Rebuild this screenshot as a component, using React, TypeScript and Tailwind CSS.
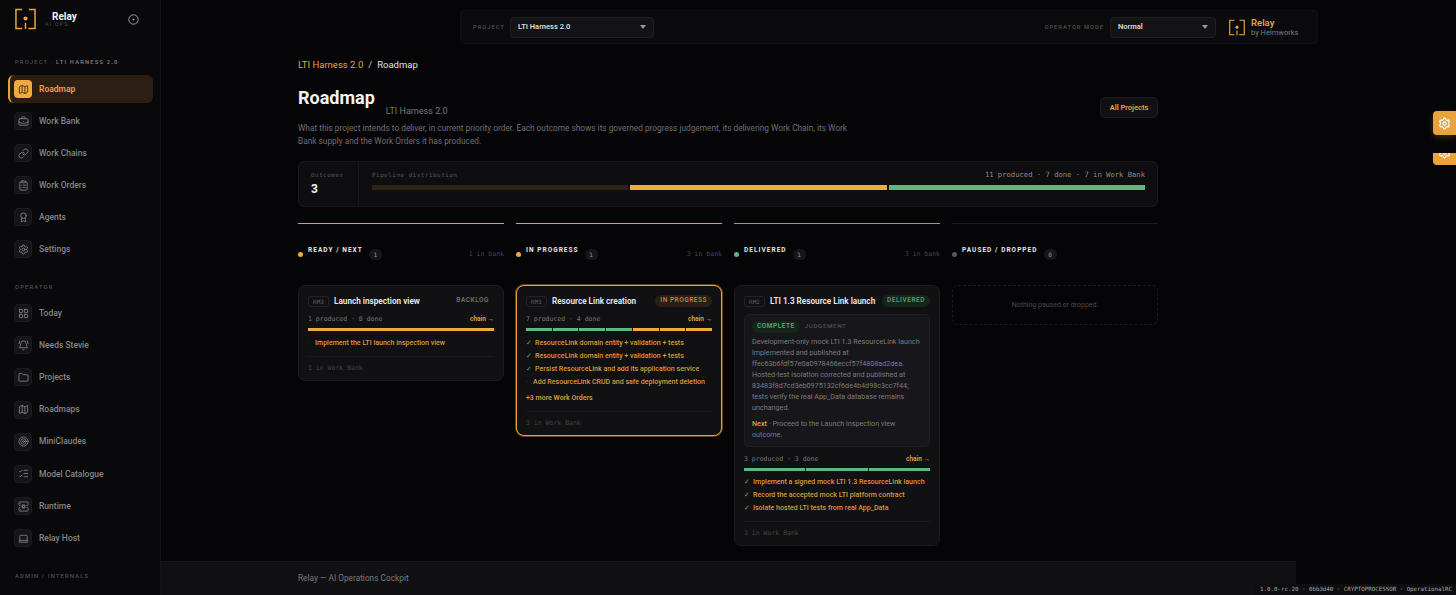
import React from "react";
import { Map as MapIcon, BriefcaseBusiness, Link as LinkIcon, ClipboardList, Award, Settings, LayoutGrid, BellRing, Folder, Target, ListChecks, ServerCog, Laptop } from "lucide-react";

const mono = "font-['DejaVu_Sans_Mono',monospace]";

function Logo({ className }: { className: string }) {
  return (
    <svg viewBox="0 0 22 22" fill="none" className={className} stroke="#e8a33d" strokeWidth="1.6">
      <path d="M7.5 1H1v20h6.5M14.5 1H21v20h-7" />
      <circle cx="11" cy="10.5" r="2.1" fill="#e8a33d" stroke="none" />
      <path d="M11 15v6.5" />
    </svg>
  );
}

function NavItem({ icon: Icon, label, active }: { icon: any; label: string; active?: boolean }) {
  if (active) {
    return (
      <div className="flex items-center gap-[7px] h-[28px] ml-[8px] mr-[7px] pl-[4px] rounded-[6px] bg-[#2a1f12] border-l-2 border-[#e8a33d]">
        <div className="w-[18px] h-[18px] rounded-[4px] bg-[#f0aa42] flex items-center justify-center">
          <Icon size={11} className="text-[#4a3010]" strokeWidth={2} />
        </div>
        <span className="text-[8.5px] font-semibold text-[#e8a33d]">{label}</span>
      </div>
    );
  }
  return (
    <div className="flex items-center gap-[7px] h-[28px] ml-[8px] mr-[7px] pl-[6px]">
      <div className="w-[18px] h-[18px] rounded-[4px] bg-[#151517] border border-[#1c1c1f] flex items-center justify-center">
        <Icon size={11} className="text-[#8e8e90]" strokeWidth={1.7} />
      </div>
      <span className="text-[8.5px] font-medium text-[#858587]">{label}</span>
    </div>
  );
}

function Select({ value, w }: { value: string; w: string }) {
  return (
    <div className={`${w} h-[21px] rounded-[4px] bg-[#131315] border border-[#1f1f22] flex items-center justify-between pl-[7px] pr-[7px]`}>
      <span className="text-[7.5px] font-semibold text-[#dcdcdc]">{value}</span>
      <svg width="6" height="4" viewBox="0 0 6 4"><path d="M0 0h6L3 4z" fill="#9a9a9a" /></svg>
    </div>
  );
}

function Tag({ children, cls }: { children: React.ReactNode; cls: string }) {
  return <span className={`text-[6.5px] font-semibold tracking-[0.08em] rounded-full px-[5px] h-[12px] flex items-center whitespace-nowrap ${cls}`}>{children}</span>;
}

function ColHead({ dot, line, title, count, bank }: { dot: string; line: string; title: string; count: number; bank?: string }) {
  return (
    <div className="flex flex-col">
      <div className={`h-px ${line}`} />
      <div className="flex items-center mt-[24px] h-[12px]">
        <span className={`w-[5px] h-[5px] rounded-full ${dot}`} />
        <span className="ml-[5px] mb-[7px] text-[6.5px] font-bold tracking-[0.16em] text-[#e6e6e6] whitespace-nowrap">{title}</span>
        <span className={`ml-[6px] w-[13px] h-[11px] rounded-full bg-[#17171a] text-[6px] text-[#9a9a9a] flex items-center justify-center ${mono}`}>{count}</span>
        {bank && <span className={`ml-auto mt-[2px] text-[6.5px] text-[#454547] ${mono}`}>{bank}</span>}
      </div>
    </div>
  );
}

function Head({ rm, title, tag }: { rm: string; title: string; tag: React.ReactNode }) {
  return (
    <div className="flex items-center h-[12px]">
      <span className={`h-[11px] w-[21px] shrink-0 rounded-[3px] border border-[#232326] flex items-center justify-center text-[6px] text-[#5e5e60] ${mono}`}>{rm}</span>
      <span className="ml-[5px] text-[8.2px] font-semibold text-[#ececec] whitespace-nowrap">{title}</span>
      <span className="ml-auto">{tag}</span>
    </div>
  );
}

function Progress({ text, bars }: { text: string; bars: string[] }) {
  return (
    <>
      <div className="flex items-center justify-between h-[10px]">
        <span className={`text-[6.5px] text-[#77777a] ${mono}`}>{text}</span>
        <span className="text-[6.5px] font-semibold text-[#e8a33d]">chain →</span>
      </div>
      <div className="flex gap-[1px] mt-[3px] h-[3px]">
        {bars.map((c, i) => (
          <div key={i} className={`flex-1 ${c}`} />
        ))}
      </div>
    </>
  );
}

function WO({ text, done }: { text: string; done?: boolean }) {
  return (
    <div className="flex items-center h-[13px]">
      <span className={`shrink-0 text-[7px] ${done ? "w-[9px] text-[#56a878]" : "w-[7px] text-[#444]"}`}>{done ? "✓" : "·"}</span>
      <span className="text-[7.05px] font-medium text-[#d9983a] whitespace-nowrap">{text}</span>
    </div>
  );
}

function CardFoot({ text }: { text: string }) {
  return (
    <div className="border-t border-[#1b1b1e] mt-[6px] pt-[7px] h-[16px]">
      <div className={`text-[6.5px] leading-[8px] text-[#434345] ${mono}`}>{text}</div>
    </div>
  );
}

const G = "bg-[#5bb880]";
const O = "bg-[#f0aa42]";
const sideLabel = "ml-[15px] text-[5.8px] leading-[8px] tracking-[0.2em] text-[#4f4f51] font-medium whitespace-nowrap";

export default function App() {
  return (
    <div className="relative flex h-[595px] w-[1456px] overflow-hidden bg-[#050507] font-['Roboto',sans-serif]">
      <aside className="w-[161px] shrink-0 bg-[#09090b] border-r border-[#141416] flex flex-col">
        <div className="flex items-center pt-[8px] pl-[15px] pr-[21px] h-[30px]">
          <Logo className="w-[21px] h-[22px] shrink-0" />
          <div className="ml-[9px] flex flex-col">
            <span className="ml-[7px] text-[10px] font-bold leading-[12px] text-[#f2f2f2]">Relay</span>
            <span className="-mt-[2px] text-[5.5px] tracking-[0.2em] leading-[7px] text-[#4a4a4c]">AI OPS</span>
          </div>
          <svg className="ml-auto" width="11" height="11" viewBox="0 0 11 11" fill="none">
            <circle cx="5.5" cy="5.5" r="4.7" stroke="#9c9c9c" />
            <circle cx="5.5" cy="5.5" r="1" fill="#9c9c9c" />
          </svg>
        </div>
        <div className={`mt-[28px] ${sideLabel}`}>
          PROJECT · <span className="text-[#79797b] font-semibold">LTI HARNESS 2.0</span>
        </div>
        <div className="mt-[9px] flex flex-col gap-[4px]">
          <NavItem icon={MapIcon} label="Roadmap" active />
          <NavItem icon={BriefcaseBusiness} label="Work Bank" />
          <NavItem icon={LinkIcon} label="Work Chains" />
          <NavItem icon={ClipboardList} label="Work Orders" />
          <NavItem icon={Award} label="Agents" />
          <NavItem icon={Settings} label="Settings" />
        </div>
        <div className={`mt-[20px] ${sideLabel}`}>OPERATOR</div>
        <div className="mt-[8px] flex flex-col gap-[4.2px]">
          <NavItem icon={LayoutGrid} label="Today" />
          <NavItem icon={BellRing} label="Needs Stevie" />
          <NavItem icon={Folder} label="Projects" />
          <NavItem icon={MapIcon} label="Roadmaps" />
          <NavItem icon={Target} label="MiniClaudes" />
          <NavItem icon={ListChecks} label="Model Catalogue" />
          <NavItem icon={ServerCog} label="Runtime" />
          <NavItem icon={Laptop} label="Relay Host" />
        </div>
        <div className={`mt-[20px] ${sideLabel}`}>ADMIN / INTERNALS</div>
      </aside>

      <div className="w-[1135px] shrink-0 flex flex-col h-full">
        <header className="mt-[10px] ml-[299px] w-[858px] shrink-0 h-[34px] rounded-[4px] bg-[#0b0b0d] border border-[#101012] flex items-center pl-[12px] pr-[19px]">
          <span className="w-[31px] text-[5.8px] tracking-[0.17em] text-[#4f4f51] font-medium">PROJECT</span>
          <div className="ml-[6px]"><Select value="LTI Harness 2.0" w="w-[144px]" /></div>
          <span className="ml-auto text-[5.8px] tracking-[0.17em] text-[#4f4f51] font-medium whitespace-nowrap">OPERATOR MODE</span>
          <div className="ml-[6px]"><Select value="Normal" w="w-[106px]" /></div>
          <Logo className="ml-[13px] w-[16px] h-[17px]" />
          <div className="ml-[6px] w-[47px] flex flex-col">
            <span className="text-[9.5px] font-semibold leading-[11px] text-[#e8a33d]">Relay</span>
            <span className="text-[7.5px] leading-[9px] text-[#78787a] whitespace-nowrap">by Helmworks</span>
          </div>
        </header>

        <main className="flex-1 min-h-0 pl-[137px] pr-[138px] flex flex-col">
          <div className="mt-[15px] flex items-center text-[9.5px] leading-[12px] whitespace-nowrap">
            <span className="text-[#e8a33d]">LTI Harness 2.0</span>
            <span className="mx-[5px] text-[#d0d0d0]">/</span>
            <span className="text-[#e0e0e0]">Roadmap</span>
          </div>

          <div className="mt-[15px] flex items-start">
            <h1 className="text-[18px] leading-[24px] font-bold text-[#f2f2f2]">Roadmap</h1>
            <span className="ml-[11px] mt-[19px] text-[9px] leading-[12px] text-[#77777a]">LTI Harness 2.0</span>
            <button className="ml-auto mt-[11px] w-[58px] h-[21px] rounded-[5px] bg-[#111113] border border-[#1f1f22] text-[7.5px] font-semibold text-[#e8a33d]">All Projects</button>
          </div>
          <p className="mt-[4px] w-[550px] text-[8.3px] leading-[13px] text-[#6f6f72]">
            What this project intends to deliver, in current priority order. Each outcome shows its governed progress judgement, its delivering Work Chain, its Work Bank supply and the Work Orders it has produced.
          </p>

          <div className="mt-[13px] h-[46px] shrink-0 rounded-[6px] bg-[#0e0e10] border border-[#1b1b1e] flex">
            <div className="w-[60px] shrink-0 border-r border-[#18181b] pl-[12px] pt-[10px]">
              <div className={`text-[5.8px] leading-[7px] tracking-[0.1em] text-[#5a5a5c] ${mono}`}>Outcomes</div>
              <div className="mt-[3px] text-[12px] leading-[15px] font-bold text-[#efefef]">3</div>
            </div>
            <div className="flex-1 pl-[13px] pr-[12px] pt-[8px]">
              <div className="flex items-center justify-between h-[10px]">
                <span className={`text-[5.8px] tracking-[0.1em] text-[#5a5a5c] ${mono}`}>Pipeline distribution</span>
                <span className={`text-[7.2px] text-[#8a8a8c] ${mono}`}>11 produced · 7 done · 7 in Work Bank</span>
              </div>
              <div className="mt-[5px] flex gap-[2px] h-[5px]">
                <div className="flex-1 bg-[#2c2316]" />
                <div className="flex-1 bg-[#f0aa42]" />
                <div className="flex-1 bg-[#5bb880]" />
              </div>
            </div>
          </div>

          <div className="mt-[16px] grid grid-cols-4 gap-x-[12px] items-start">
            <ColHead dot="bg-[#f0aa42]" line="bg-[#e8a33d]" title="READY / NEXT" count={1} bank="1 in bank" />
            <ColHead dot="bg-[#f0aa42]" line="bg-[#e8a33d]" title="IN PROGRESS" count={1} bank="3 in bank" />
            <ColHead dot="bg-[#5bb880]" line="bg-[#5bb880]" title="DELIVERED" count={1} bank="3 in bank" />
            <ColHead dot="bg-[#5a5a5c]" line="bg-[#1d1d20]" title="PAUSED / DROPPED" count={0} />
          </div>

          <div className="mt-[25px] grid grid-cols-4 gap-x-[12px] items-start">
            <div className="rounded-[7px] bg-[#111113] border border-[#1b1b1e] px-[9px] pt-[9px] pb-[8px]">
              <Head rm="RM3" title="Launch inspection view" tag={<Tag cls="text-[#6e6e70]">BACKLOG</Tag>} />
              <div className="mt-[8px]" />
              <Progress text="1 produced · 0 done" bars={[O]} />
              <div className="mt-[6px]"><WO text="Implement the LTI launch inspection view" /></div>
              <CardFoot text="1 in Work Bank" />
            </div>

            <div className="rounded-[8px] bg-[#111113] border border-[#e8a33d] shadow-[0_0_0_1px_rgba(232,163,61,0.4)] px-[9px] pt-[9px] pb-[8px]">
              <Head rm="RM1" title="Resource Link creation" tag={<Tag cls="bg-[#2a1f12] text-[#b98434]">IN PROGRESS</Tag>} />
              <div className="mt-[8px]" />
              <Progress text="7 produced · 4 done" bars={[G, G, G, G, O, O, O]} />
              <div className="mt-[6px]">
                <WO done text="ResourceLink domain entity + validation + tests" />
                <WO done text="ResourceLink domain entity + validation + tests" />
                <WO done text="Persist ResourceLink and add its application service" />
                <WO text="Add ResourceLink CRUD and safe deployment deletion" />
              </div>
              <div className="mt-[3px] text-[7px] leading-[13px] font-semibold text-[#d9983a]">+3 more Work Orders</div>
              <CardFoot text="3 in Work Bank" />
            </div>

            <div className="rounded-[7px] bg-[#111113] border border-[#1b1b1e] px-[9px] pt-[9px] pb-[8px]">
              <Head rm="RM2" title="LTI 1.3 Resource Link launch" tag={<Tag cls="bg-[#14261c] text-[#4f9c70]">DELIVERED</Tag>} />
              <div className="mt-[7px] rounded-[5px] bg-[#17171b] border border-[#202024] px-[7px] pt-[6px] pb-[6px]">
                <div className="flex items-center">
                  <Tag cls="bg-[#14261c] text-[#56a878]">COMPLETE</Tag>
                  <span className="ml-[5px] text-[6.2px] font-medium tracking-[0.1em] text-[#4f4f51]">JUDGEMENT</span>
                </div>
                <p className="mt-[3px] text-[7.2px] leading-[11px] text-[#7a7a7e] whitespace-nowrap">
                  Development-only mock LTI 1.3 ResourceLink launch<br />implemented and published at<br />ffec63b6fdf57e0a0978466eccf57f4808ad2dea.<br />Hosted-test isolation corrected and published at<br />83483f8d7cd3eb0975132cf6de4b4d98c3cc7f44;<br />tests verify the real App_Data database remains<br />unchanged.
                </p>
                <p className="mt-[5px] text-[7.2px] leading-[11px] text-[#7a7a7e]">
                  <span className="font-semibold text-[#d9983a]">Next</span> · Proceed to the Launch inspection view<br />outcome.
                </p>
              </div>
              <div className="mt-[8px]" />
              <Progress text="3 produced · 3 done" bars={[G, G, G]} />
              <div className="mt-[5px]">
                <WO done text="Implement a signed mock LTI 1.3 ResourceLink launch" />
                <WO done text="Record the accepted mock LTI platform contract" />
                <WO done text="Isolate hosted LTI tests from real App_Data" />
              </div>
              <CardFoot text="3 in Work Bank" />
            </div>

            <div className="h-[40px] rounded-[6px] border border-dashed border-[#19191c] flex items-center justify-center text-[7px] text-[#48484a]">
              Nothing paused or dropped.
            </div>
          </div>
        </main>

        <footer className="h-[34px] shrink-0 bg-[#111113] border-t border-[#19191c] pl-[137px] pt-[10px] text-[8.3px] leading-[12px] text-[#77777a]">
          Relay — AI Operations Cockpit
        </footer>
      </div>

      <div className="absolute right-0 top-[111px] w-[23px] h-[24px] rounded-l-[4px] bg-[#e8a33d] flex items-center justify-center pr-[1px] shadow-[0_2px_6px_rgba(232,163,61,0.25)]">
        <Settings size={13} className="text-white" strokeWidth={2} />
      </div>
      <div className="absolute right-0 top-[153px] w-[23px] h-[12px] rounded-bl-[4px] bg-[#e8a33d] overflow-hidden flex justify-center pr-[1px]">
        <Settings size={13} className="text-white -mt-[7px] shrink-0" strokeWidth={2} />
      </div>
      <div className={`absolute right-0 bottom-0 h-[11px] pl-[7px] pr-[4px] bg-[#0e0e10] text-[5.8px] leading-[11px] text-[#a8a8aa] whitespace-nowrap ${mono}`}>
        1.0.0-rc.20 · 0bb3d40 · CRYPTOPROCESSOR · OperationalRC
      </div>
    </div>
  );
}
